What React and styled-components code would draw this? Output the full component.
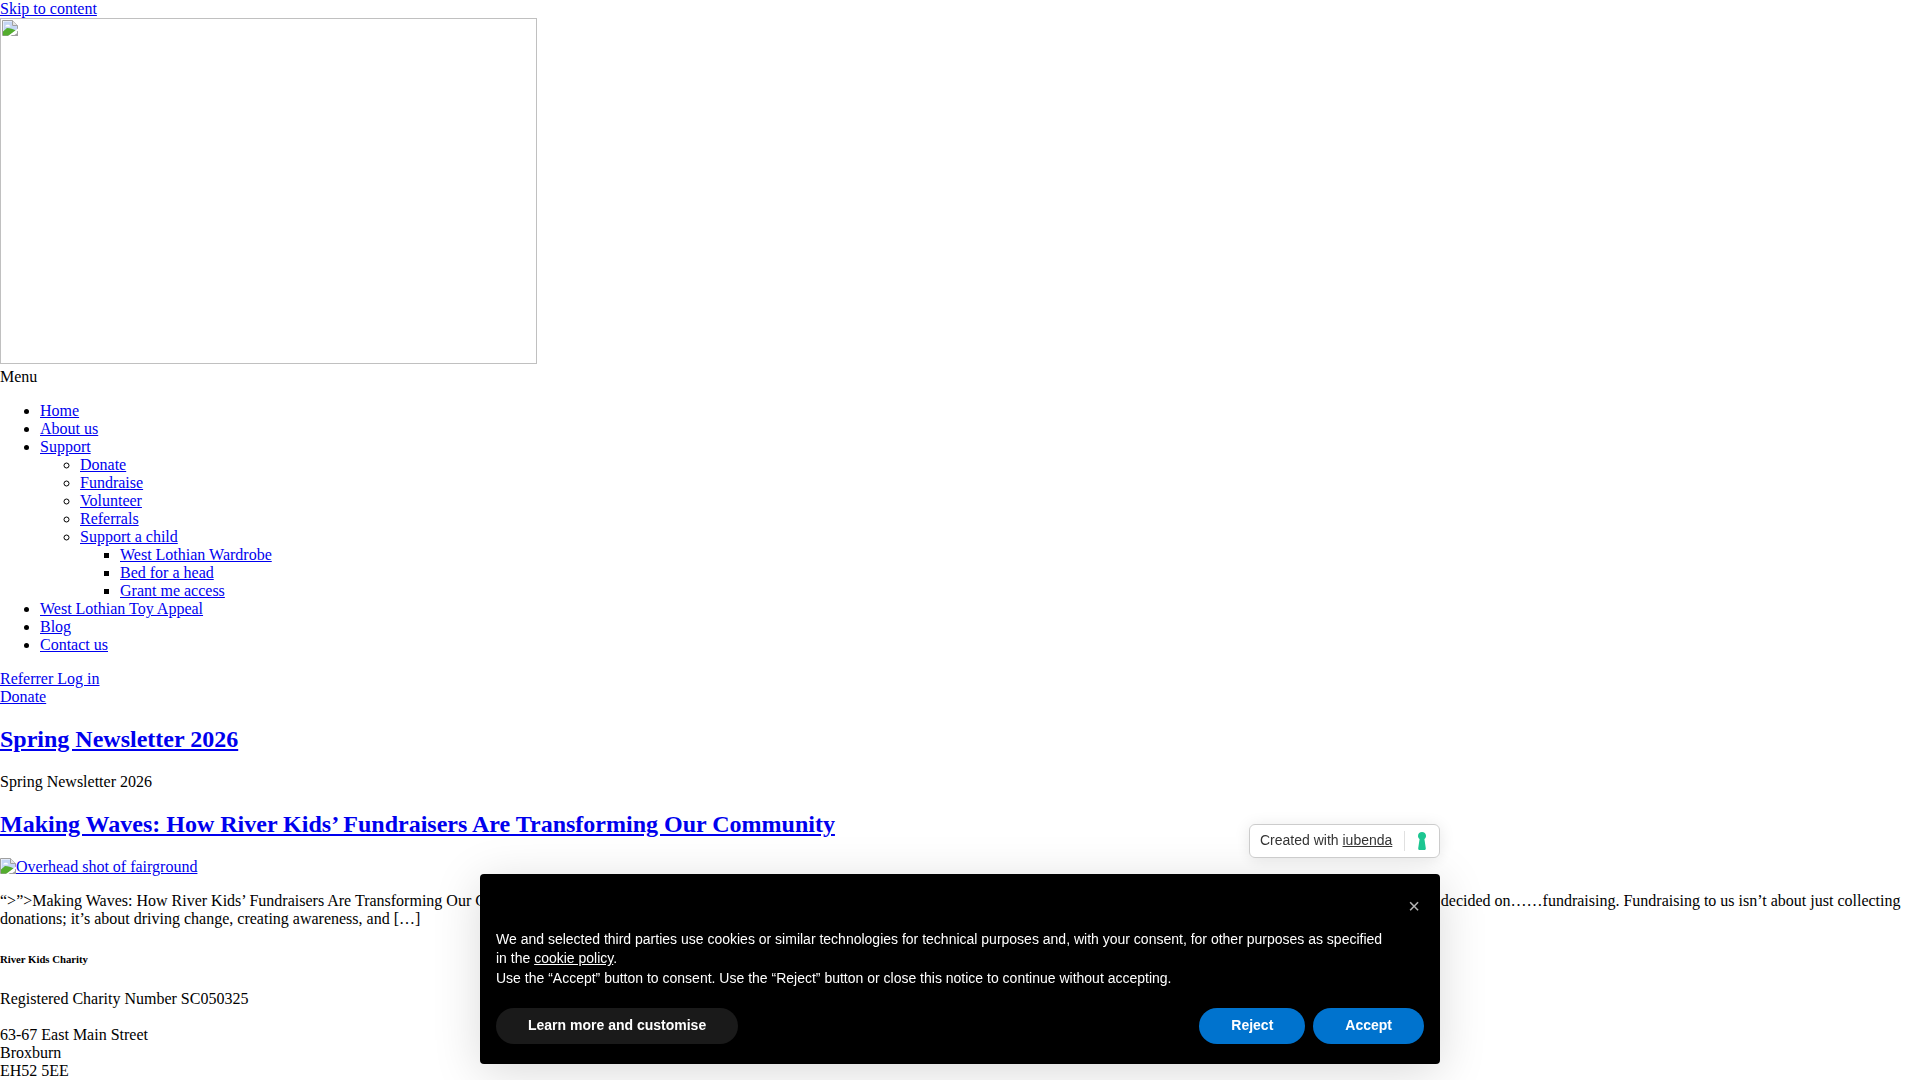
import React from "react";
import styled, { createGlobalStyle } from "styled-components";

const Global = createGlobalStyle`
  body {
    margin: 0;
    background: #fff;
    color: #000;
    font-family: "Liberation Serif", "Times New Roman", serif;
    font-size: 16px;
  }
`;

const BrokenIcon = () => (
  <IconSvg viewBox="0 0 16 16" width="16" height="16">
    <path d="M.5.5h10l5 5v10H.5z" fill="#fff" stroke="#a0a0a0" />
    <path d="M10.5.5v5h5" fill="#e4e4e4" stroke="#a0a0a0" />
    <path d="M1.5 1.5h8.5V6h5v6H1.5z" fill="#c5d6f5" />
    <path d="M3 6.5c1-2.5 4.5-2.5 5.5 0z" fill="#fff" />
    <path d="M1 15.5v-4L5 8c3 .2 6 1 9 2.5l-6.500 5z" fill="#54ad2e" />
    <path d="M16 8.500v2.200L8.500 16H6z" fill="#fff" />
    <path d="M11 16l5-3.500V16z" fill="#a0a0a0" />
  </IconSvg>
);

const Keyhole = () => (
  <svg viewBox="0 0 8 18" width="8" height="18">
    <path
      d="M4 0C6.2 0 8 1.7 8 3.9 8 5.3 7.3 6.4 6.4 7.1L7.8 16.2c.1 1-.4 1.8-1.4 1.8H1.6C.6 18 .1 17.2.2 16.2L1.6 7.1C.7 6.4 0 5.3 0 3.9 0 1.7 1.8 0 4 0z"
      fill="#1cc691"
    />
  </svg>
);

const App = () => {
  return (
    <>
      <Global />
      <a href="#content">Skip to content</a>
      <header>
        <LogoBox>
          <BrokenIcon />
        </LogoBox>
        <div>Menu</div>
        <ul>
          <li><a href="#home">Home</a></li>
          <li><a href="#about">About us</a></li>
          <li>
            <a href="#support">Support</a>
            <ul>
              <li><a href="#donate">Donate</a></li>
              <li><a href="#fundraise">Fundraise</a></li>
              <li><a href="#volunteer">Volunteer</a></li>
              <li><a href="#referrals">Referrals</a></li>
              <li>
                <a href="#child">Support a child</a>
                <ul>
                  <li><a href="#wardrobe">West Lothian Wardrobe</a></li>
                  <li><a href="#bed">Bed for a head</a></li>
                  <li><a href="#grant">Grant me access</a></li>
                </ul>
              </li>
            </ul>
          </li>
          <li><a href="#toy">West Lothian Toy Appeal</a></li>
          <li><a href="#blog">Blog</a></li>
          <li><a href="#contact">Contact us</a></li>
        </ul>
        <div><a href="#login">Referrer Log in</a></div>
        <div><a href="#donate">Donate</a></div>
      </header>
      <main id="content">
        <h2><a href="#spring">Spring Newsletter 2026</a></h2>
        <div>Spring Newsletter 2026</div>
        <h2><a href="#waves">Making Waves: How River Kids’ Fundraisers Are Transforming Our Community</a></h2>
        <div>
          <a href="#waves"><BrokenIcon />Overhead shot of fairground</a>
        </div>
        <p>
          “&gt;”&gt;Making Waves: How River Kids’ Fundraisers Are Transforming Our Community When we set off to raise money for the children and young people across West Lothian and the wider Scottish community we support, we decided on……fundraising. Fundraising to us isn’t about just collecting donations; it’s about driving change, creating awareness, and […]
        </p>
      </main>
      <footer>
        <h6>River Kids Charity</h6>
        <p>Registered Charity Number SC050325</p>
        <Address>
          63-67 East Main Street<br />
          Broxburn<br />
          EH52 5EE
        </Address>
      </footer>
      <Banner>
        <Badge>
          <BadgeText>Created with <u>iubenda</u></BadgeText>
          <BadgeMark><Keyhole /></BadgeMark>
        </Badge>
        <CloseButton>×</CloseButton>
        <Notice>
          We and selected third parties use cookies or similar technologies for technical purposes and, with your consent, for other purposes as specified in the <NoticeLink href="#policy">cookie policy</NoticeLink>.
          <br />
          Use the “Accept” button to consent. Use the “Reject” button or close this notice to continue without accepting.
        </Notice>
        <Actions>
          <PillButton $dark>Learn more and customise</PillButton>
          <RightActions>
            <PillButton>Reject</PillButton>
            <PillButton>Accept</PillButton>
          </RightActions>
        </Actions>
      </Banner>
    </>
  );
};

const IconSvg = styled.svg`
  display: inline-block;
  vertical-align: -2px;
`;

const LogoBox = styled.div`
  display: inline-block;
  box-sizing: border-box;
  width: 537px;
  height: 346px;
  padding: 1px;
  border: 1px solid #c0c0c0;
  overflow: hidden;
  line-height: 18px;
`;

const Address = styled.p`
  margin: 18px 0 0;
`;

const Banner = styled.section`
  position: fixed;
  left: 480px;
  bottom: 16px;
  box-sizing: border-box;
  width: 960px;
  height: 190px;
  padding: 55.6px 16px 20px 16px;
  background: #000;
  color: #fff;
  border-radius: 4px;
  box-shadow: 0 8px 48px rgba(0, 0, 0, 0.15);
  font-family: "Liberation Sans", Arial, sans-serif;
`;

const Badge = styled.div`
  position: absolute;
  right: 0;
  bottom: calc(100% + 16px);
  box-sizing: border-box;
  display: flex;
  align-items: center;
  width: 191px;
  height: 34px;
  padding: 0 10px 2px;
  background: #fff;
  color: #333;
  border: 1px solid #ccc;
  border-radius: 6px;
  box-shadow: 0 2px 16px rgba(0, 0, 0, 0.1);
  font-size: 14px;
`;

const BadgeText = styled.span`
  white-space: nowrap;

  u {
    color: #333;
  }
`;

const BadgeMark = styled.span`
  display: flex;
  align-items: center;
  height: 20px;
  margin: 2px 0 0 12px;
  padding-left: 13px;
  border-left: 1px solid #e0e0e0;
`;

const CloseButton = styled.button`
  position: absolute;
  top: 20px;
  right: 16px;
  width: 20px;
  height: 24px;
  padding: 0;
  border: 0;
  background: none;
  color: #fff;
  opacity: 0.7;
  font-family: "Liberation Sans", Arial, sans-serif;
  font-size: 20px;
  line-height: 24px;
`;

const Notice = styled.div`
  max-width: 895px;
  font-size: 14px;
  line-height: 19.6px;
`;

const NoticeLink = styled.a`
  color: #fff;
`;

const Actions = styled.div`
  display: flex;
  justify-content: space-between;
  margin-top: 19.4px;
`;

const RightActions = styled.div`
  display: flex;
  gap: 8px;
`;

const PillButton = styled.button`
  height: 36px;
  padding: 0 32px 2px;
  border: 0;
  border-radius: 64px;
  background: ${(p) => (p.$dark ? "#1a1a1a" : "#0073ce")};
  color: #fff;
  font-family: "Liberation Sans", Arial, sans-serif;
  font-size: 14px;
  font-weight: 700;
`;

export default App;
